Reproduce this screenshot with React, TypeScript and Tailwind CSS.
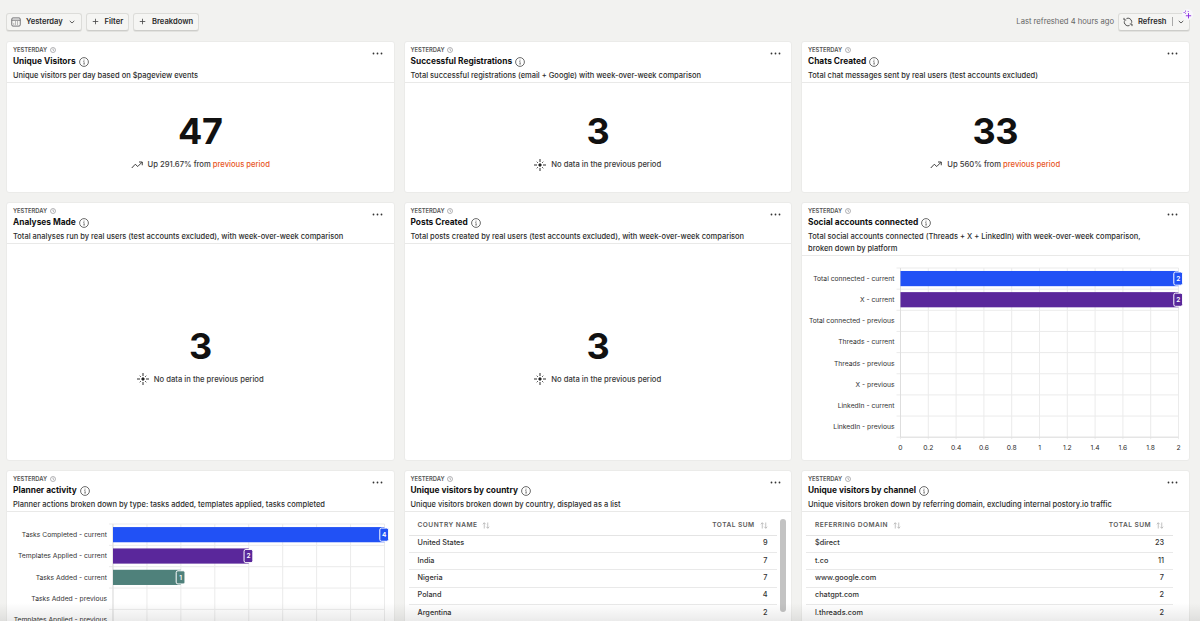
import React from "react";

function ClockIcon() {
  return (
    <svg className="size-[6px] shrink-0 text-[#77777a]" viewBox="0 0 12 12" fill="none" stroke="currentColor" strokeWidth="1.1">
      <circle cx="6" cy="6" r="5" />
      <path d="M6 3v3.2l2 1" />
    </svg>
  );
}

function InfoIcon() {
  return (
    <svg className="size-[10px] shrink-0 text-[#3a3a3a]" viewBox="0 0 20 20" fill="none" stroke="currentColor" strokeWidth="1.5">
      <circle cx="10" cy="10" r="8.8" />
      <path d="M8.6 9h1.6v5M8.4 14h3.6" strokeWidth="1.1" />
      <circle cx="10" cy="6.2" r="0.5" fill="currentColor" strokeWidth="0.8" />
    </svg>
  );
}

function CalendarIcon() {
  return (
    <svg className="size-[10px] shrink-0 text-[#55565a]" viewBox="0 0 20 20" fill="none" stroke="currentColor" strokeWidth="1.6">
      <rect x="1.5" y="1.8" width="17" height="16.4" rx="2.5" />
      <path d="M1.5 6.4h17" />
      <path d="M8.2 10h1.8M12.2 10H14M4.6 14h1.8M8.2 14h1.8M12.2 14H14" />
    </svg>
  );
}

function PlusIcon() {
  return (
    <svg className="size-[7px] shrink-0 text-[#444]" viewBox="0 0 14 14" fill="none" stroke="currentColor" strokeWidth="1.6">
      <path d="M7 1.5v11M1.5 7h11" />
    </svg>
  );
}

function ChevronIcon() {
  return (
    <svg className="h-[4px] w-[6px] shrink-0 text-[#444]" viewBox="0 0 12 8" fill="none" stroke="currentColor" strokeWidth="1.7">
      <path d="M1.5 1.8 6 6l4.5-4.2" />
    </svg>
  );
}

function RefreshIcon() {
  return (
    <svg className="size-[10px] shrink-0 text-[#333]" viewBox="0 0 20 20" fill="none" stroke="currentColor" strokeWidth="1.7">
      <path d="M7 2.9A7.6 7.6 0 0 1 17.4 9v2.5" />
      <path d="M13 17.1A7.6 7.6 0 0 1 2.600 11V8.500" />
      <path d="M2 1.800v4.200h4.500" />
      <path d="M18 18.200V14h-4.500" />
    </svg>
  );
}

function SparkleIcon() {
  return (
    <svg className="size-[9px]" viewBox="0 0 18 18" fill="none" stroke="#8b2fe0" strokeWidth="1.9" strokeLinecap="round">
      <path d="M11 7v9M6.500 11.500h9" />
      <path d="M5 2v.6M2 5h.6M5.200 6.500v.1M10.500 3v.1" />
    </svg>
  );
}

function TrendIcon() {
  return (
    <svg className="h-[8px] w-[12px] shrink-0 text-[#333]" viewBox="0 0 24 16" fill="none" stroke="currentColor" strokeWidth="1.9">
      <path d="M1.5 14 8.5 6.5 13.5 11 22 2.5" />
      <path d="M16 2h6.5v6.5" />
    </svg>
  );
}

function FlareIcon() {
  return (
    <svg className="size-[12px] shrink-0 text-[#222]" viewBox="0 0 24 24" fill="none" stroke="currentColor" strokeWidth="1.9">
      <circle cx="12" cy="12" r="2.4" fill="currentColor" />
      <path d="M12 0v6M12 18v6M0 12h6M18 12h6M5.5 5.5l2 2M16.5 16.5l2 2M18.5 5.5l-2 2M7.5 16.5l-2 2" />
    </svg>
  );
}

function SortIcon() {
  return (
    <svg className="h-[7px] w-[8px] shrink-0 text-[#b2b2b2]" viewBox="0 0 16 14" fill="none" stroke="currentColor" strokeWidth="1.6">
      <path d="M4.5 13V1.5M1.5 4.5l3-3 3 3M11.5 1v11.5M8.5 9.5l3 3 3-3" />
    </svg>
  );
}

type CardProps = {
  title: string;
  description: React.ReactNode;
  height: string;
  children: React.ReactNode;
};

function Card({ title, description, height, children }: CardProps) {
  return (
    <section className={`relative flex flex-col overflow-hidden rounded-[3px] border border-[#ebebe9] bg-white ${height}`}>
      <header className="shrink-0 border-b border-[#e9e9e8] pt-[3px] pl-[6px]">
        <div className="flex h-[10px] items-center gap-[2.5px] text-[5.8px] font-semibold tracking-[-0.03px] text-[#555]">
          YESTERDAY
          <ClockIcon />
        </div>
        <h2 className="flex h-[13px] items-center gap-[3px] text-[8.35px] font-bold text-[#111]">
          <span>{title}</span>
          <InfoIcon />
        </h2>
        <p className="mt-[1.5px] text-[7.5px] leading-[12.2px] font-medium whitespace-nowrap text-[#2d2d2d]">{description}</p>
      </header>
      <svg className="absolute top-[10px] right-[10.5px] h-[3px] w-[11px]" viewBox="0 0 11 3" fill="#333">
        <circle cx="1.5" cy="1.5" r="0.9" />
        <circle cx="5.5" cy="1.5" r="0.9" />
        <circle cx="9.5" cy="1.5" r="0.9" />
      </svg>
      {children}
    </section>
  );
}

function BigNumber({ value, up }: { value: string; up?: string }) {
  return (
    <div className="flex flex-1 flex-col items-center justify-center pt-[1px]">
      <div className="h-[54px] text-[36px] leading-[54px] font-bold tracking-[-0.5px] text-[#111]">{value}</div>
      <div className="flex h-[13px] items-center gap-[5px] text-[7.65px] font-medium text-[#3a3a3a]">
        {up ? <TrendIcon /> : <FlareIcon />}
        {up ? (
          <span>
            Up {up} from <span className="text-[#e8571f]">previous period</span>
          </span>
        ) : (
          <span>No data in the previous period</span>
        )}
      </div>
    </div>
  );
}

type Bar = { label: string; value: number; color?: string };

type ChartProps = {
  bars: Bar[];
  left: number;
  right: number;
  top: number;
  row: number;
  max: number;
  divisions: number;
  ticks?: string[];
  height: number;
};

function BarChart({ bars, left, right, top, row, max, divisions, ticks = [], height }: ChartProps) {
  const step = (right - left) / divisions;
  const bottom = top + row * bars.length;
  return (
    <svg width="386" height={height} className="shrink-0" fontFamily="Inter, sans-serif" fontSize="6.75">
      <g stroke="#ebebeb" strokeWidth="1">
        {Array.from({ length: divisions + 1 }, (_, i) => (
          <line key={i} x1={left + i * step} x2={left + i * step} y1={top} y2={bottom + 2} />
        ))}
        {[...bars, null].map((_, i) => (
          <line key={i} x1={left - 4} x2={right} y1={top + i * row} y2={top + i * row} />
        ))}
      </g>
      <path d={`M${left} ${top}V${bottom}H${right}`} fill="none" stroke="#d8d8d8" strokeWidth="0.7" />
      {bars.map((b, i) => {
        const mid = top + (i + 0.5) * row;
        const end = left + (b.value / max) * (right - left);
        return (
          <g key={b.label}>
            <text x={left - 6} y={mid + 2.4} textAnchor="end" fill="#333">
              {b.label}
            </text>
            {b.color && (
              <>
                <rect x={left} y={mid - 7.6} width={end - left} height="15.2" fill={b.color} />
                <rect x={end - 4.7} y={mid - 6.6} width="8.8" height="13.2" rx="1.8" fill={b.color} stroke="#fff" strokeWidth="1" />
                <text x={end - 0.3} y={mid + 2.4} textAnchor="middle" fontSize="6.5" fontWeight="600" fill="#fff">
                  {b.value}
                </text>
              </>
            )}
          </g>
        );
      })}
      {ticks.map((t, i) => (
        <text key={t} x={left + i * step} y={bottom + 12.8} textAnchor="middle" fill="#2a2a2a">
          {t}
        </text>
      ))}
    </svg>
  );
}

function DataTable({ name, rows, scroll }: { name: string; rows: [string, string][]; scroll?: boolean }) {
  return (
    <div className="flex px-[4px] pt-[5px]">
      <div className={scroll ? "w-[368px]" : "w-[367px]"}>
        <div className="flex h-[19px] items-center justify-between border-b border-[#e4e4e4] px-[9px] text-[6.6px] font-semibold tracking-[0.45px] text-[#5a5a5a]">
          <span className="flex items-center gap-[5px]">
            {name}
            <SortIcon />
          </span>
          <span className="flex items-center gap-[5px]">
            TOTAL SUM
            <SortIcon />
          </span>
        </div>
        {rows.map(([k, v]) => (
          <div key={k} className="flex h-[17.3px] items-center justify-between border-b border-[#e9e9e9] px-[9px] text-[7.3px] font-medium text-[#333]">
            <span>{k}</span>
            <span>{v}</span>
          </div>
        ))}
      </div>
      {scroll && <div className="mt-[2px] ml-[3px] h-[93px] w-[6px] rounded-full bg-[#c3c3c3]" />}
    </div>
  );
}

const buttonClass =
  "flex h-[18px] items-center rounded-[3px] border border-[#dcdcd9] border-b-[#cdcdca] bg-[#f5f5f3] text-[7.6px] font-semibold text-[#2b2b2b] shadow-[0_1px_0_#e2e2df]";

const socialBars: Bar[] = [
  { label: "Total connected - current", value: 2, color: "#2151f5" },
  { label: "X - current", value: 2, color: "#5a279b" },
  { label: "Total connected - previous", value: 0 },
  { label: "Threads - current", value: 0 },
  { label: "Threads - previous", value: 0 },
  { label: "X - previous", value: 0 },
  { label: "LinkedIn - current", value: 0 },
  { label: "LinkedIn - previous", value: 0 },
];

const plannerBars: Bar[] = [
  { label: "Tasks Completed - current", value: 4, color: "#2151f5" },
  { label: "Templates Applied - current", value: 2, color: "#5a279b" },
  { label: "Tasks Added - current", value: 1, color: "#4f817b" },
  { label: "Tasks Added - previous", value: 0 },
  { label: "Templates Applied - previous", value: 0 },
];

export default function App() {
  return (
    <div className="relative h-[621px] w-[1200px] overflow-hidden bg-[#f2f2f0] pt-[12px] pl-[6px] font-[Inter,sans-serif]">
      <div className="flex h-[19px] w-[1184px] items-center justify-between">
        <div className="flex gap-[4px]">
          <button className={`${buttonClass} w-[75.5px] pl-[4px]`}>
            <CalendarIcon />
            <span className="ml-[5px] w-[37px] text-left">Yesterday</span>
            <span className="ml-[6px]">
              <ChevronIcon />
            </span>
          </button>
          <button className={`${buttonClass} w-[43.5px] gap-[6px] pl-[5px]`}>
            <PlusIcon />
            Filter
          </button>
          <button className={`${buttonClass} w-[65.5px] gap-[6px] pl-[5px]`}>
            <PlusIcon />
            Breakdown
          </button>
        </div>
        <div className="flex items-center gap-[4px]">
          <span className="text-[7.65px] text-[#666]">Last refreshed 4 hours ago</span>
          <button className={`${buttonClass} relative w-[72px] pl-[4px]`}>
            <RefreshIcon />
            <span className="ml-[5px] w-[29px] text-left">Refresh</span>
            <span className="ml-[5px] h-[9px] w-px bg-[#aaa]" />
            <span className="ml-[5px]">
              <ChevronIcon />
            </span>
            <span className="absolute -top-[5px] -right-[4px] flex size-[11px] items-center justify-center rounded-full bg-[#f8f6fb]">
              <SparkleIcon />
            </span>
          </button>
        </div>
      </div>

      <main className="mt-[10px] grid w-[1183.5px] grid-cols-3 gap-x-[9px] gap-y-[9px]">
        <Card title="Unique Visitors" description="Unique visitors per day based on $pageview events" height="h-[152px]">
          <BigNumber value="47" up="291.67%" />
        </Card>
        <Card title="Successful Registrations" description="Total successful registrations (email + Google) with week-over-week comparison" height="h-[152px]">
          <BigNumber value="3" />
        </Card>
        <Card title="Chats Created" description="Total chat messages sent by real users (test accounts excluded)" height="h-[152px]">
          <BigNumber value="33" up="560%" />
        </Card>

        <Card title="Analyses Made" description="Total analyses run by real users (test accounts excluded), with week-over-week comparison" height="h-[259px]">
          <BigNumber value="3" />
        </Card>
        <Card title="Posts Created" description="Total posts created by real users (test accounts excluded), with week-over-week comparison" height="h-[259px]">
          <BigNumber value="3" />
        </Card>
        <Card
          title="Social accounts connected"
          description={
            <>
              Total social accounts connected (Threads + X + LinkedIn) with week-over-week comparison,
              <br />
              broken down by platform
            </>
          }
          height="h-[259px]"
        >
          <BarChart
            bars={socialBars}
            left={98.5}
            right={376.5}
            top={12}
            row={21.15}
            max={2}
            divisions={10}
            ticks={["0", "0.2", "0.4", "0.6", "0.8", "1", "1.2", "1.4", "1.6", "1.8", "2"]}
            height={203}
          />
        </Card>

        <Card title="Planner activity" description="Planner actions broken down by type: tasks added, templates applied, tasks completed" height="h-[259px]">
          <BarChart bars={plannerBars} left={106} right={377.5} top={12} row={21.35} max={4} divisions={8} height={203} />
        </Card>
        <Card title="Unique visitors by country" description="Unique visitors broken down by country, displayed as a list" height="h-[259px]">
          <DataTable
            name="COUNTRY NAME"
            scroll
            rows={[
              ["United States", "9"],
              ["India", "7"],
              ["Nigeria", "7"],
              ["Poland", "4"],
              ["Argentina", "2"],
            ]}
          />
        </Card>
        <Card title="Unique visitors by channel" description="Unique visitors broken down by referring domain, excluding internal postory.io traffic" height="h-[259px]">
          <DataTable
            name="REFERRING DOMAIN"
            rows={[
              ["$direct", "23"],
              ["t.co", "11"],
              ["www.google.com", "7"],
              ["chatgpt.com", "2"],
              ["l.threads.com", "2"],
            ]}
          />
        </Card>
      </main>
      <div className="pointer-events-none absolute inset-x-0 bottom-0 h-[18px] bg-linear-to-b from-transparent to-black/8" />
    </div>
  );
}
